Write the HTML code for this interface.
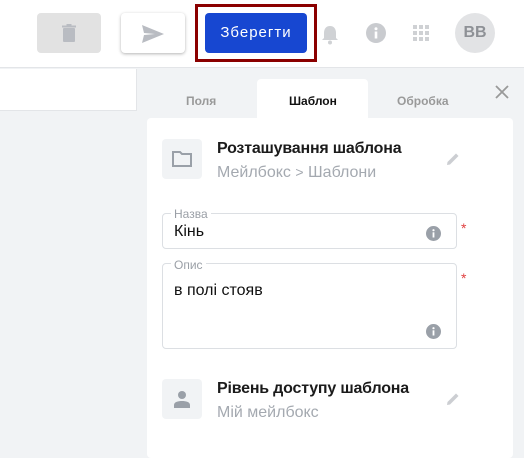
<!DOCTYPE html><html><head><meta charset="utf-8"><style>
*{box-sizing:border-box;margin:0;padding:0}
body{width:524px;height:451px;overflow:hidden;background:#f1f3f5;font-family:"Liberation Sans","DejaVu Sans",sans-serif;position:relative}
.a{position:absolute}
.hdr{left:0;top:0;width:524px;height:68px;background:#fff;border-bottom:1px solid #e3e5e8}
.ib{width:40px;height:40px;border-radius:4px;background:#f1f3f5}
.t{font-size:16px;font-weight:bold;color:#1b1b1b;letter-spacing:-0.2px}
.s{font-size:16px;color:#a4a9b0}
.fld{border:1px solid #dcdfe3;border-radius:4px;background:#fff}
.lab{font-size:12px;color:#9a9fa6;background:#fff;padding:0 3px}
</style></head><body>
<div class="a hdr"></div>
<div class="a" style="left:37px;top:13px;width:64px;height:40px;background:#e2e2e2;border-radius:4px"></div>
<svg class="a" style="left:60px;top:24px" width="18" height="19" viewBox="0 0 18 19"><rect x="3" y="4" width="12" height="14" rx="1" fill="#b9bcc2"/><rect x="2" y="1.5" width="14" height="2" fill="#b9bcc2"/><rect x="6.5" y="0" width="5" height="2" fill="#b9bcc2"/></svg>
<div class="a" style="left:121px;top:13px;width:64px;height:40px;background:#fff;border-radius:4px;box-shadow:0 1px 3px rgba(0,0,0,.3)"></div>
<svg class="a" style="left:142px;top:25px" width="22" height="18" viewBox="0 0 22 18"><path d="M0 0L22 9L0 18L2 10L13 9L2 8Z" fill="#b9bcc2"/></svg>
<div class="a" style="left:195px;top:4px;width:122px;height:58px;border:3px solid #8b0000"></div>
<div class="a" style="left:205px;top:13px;width:102px;height:40px;background:#1747d1;border-radius:4px;color:#fff;font-size:15px;text-align:center;line-height:40px;letter-spacing:1px">Зберегти</div>
<svg class="a" style="left:320px;top:24px" width="20" height="21" viewBox="0 0 20 21"><path d="M10 2C6 2 4 5 4 9V14L2 16H18L16 14V9C16 5 14 2 10 2Z" fill="#d0d2d5"/><circle cx="10" cy="18.5" r="2" fill="#d0d2d5"/></svg>
<svg class="a" style="left:366px;top:23px" width="20" height="20"><circle cx="10" cy="10" r="10" fill="#c9cbcf"/><rect x="8.7" y="8.5" width="2.6" height="7" fill="#fff"/><circle cx="10" cy="5.8" r="1.5" fill="#fff"/></svg>
<svg class="a" style="left:413px;top:25px" width="16" height="16"><g fill="#cfd1d4"><rect x="0" y="0" width="4" height="4"/><rect x="6" y="0" width="4" height="4"/><rect x="12" y="0" width="4" height="4"/><rect x="0" y="6" width="4" height="4"/><rect x="6" y="6" width="4" height="4"/><rect x="12" y="6" width="4" height="4"/><rect x="0" y="12" width="4" height="4"/><rect x="6" y="12" width="4" height="4"/><rect x="12" y="12" width="4" height="4"/></g></svg>
<div class="a" style="left:455px;top:13px;width:40px;height:40px;border-radius:50%;background:#e2e3e5;color:#8e9196;font-weight:bold;font-size:16px;text-align:center;line-height:40px">BB</div>
<div class="a" style="left:0;top:69px;width:137px;height:42px;background:#fff;border-right:1px solid #e3e5e8;border-bottom:1px solid #e3e5e8"></div>
<div class="a" style="left:186px;top:94px;font-size:12px;font-weight:bold;color:#999">Поля</div>
<div class="a" style="left:257px;top:79px;width:111px;height:40px;background:#fff;border-radius:4px 4px 0 0"></div>
<div class="a" style="left:289px;top:94px;font-size:12px;font-weight:bold;color:#111">Шаблон</div>
<div class="a" style="left:397px;top:94px;font-size:12px;font-weight:bold;color:#999">Обробка</div>
<svg class="a" style="left:494px;top:84px" width="16" height="16"><path d="M2 2L14 14M14 2L2 14" stroke="#999" stroke-width="1.8"/></svg>
<div class="a" style="left:147px;top:118px;width:366px;height:340px;background:#fff;border-radius:4px"></div>
<div class="a ib" style="left:162px;top:139px"></div>
<svg class="a" style="left:172px;top:151px" width="20" height="16"><path d="M1 1H8L10 3H19V15H1Z" fill="none" stroke="#9aa0a8" stroke-width="2"/></svg>
<div class="a t" style="left:217px;top:140px">Розташування шаблона</div>
<div class="a s" style="left:217px;top:164px">Мейлбокс <span style="font-size:14px">&gt;</span> Шаблони</div>
<svg class="a" style="left:446px;top:152px" width="14" height="14"><path d="M1 13L1.5 10L10 1.5L12.5 4L4 12.5Z" fill="#ccced2"/></svg>
<div class="a fld" style="left:162px;top:213px;width:295px;height:36px"></div>
<div class="a lab" style="left:171px;top:207px">Назва</div>
<div class="a" style="left:174px;top:223px;font-size:16px;color:#111">Кінь</div>
<svg class="a" style="left:426px;top:226px" width="15" height="15"><circle cx="7.5" cy="7.5" r="7.5" fill="#9aa0a8"/><rect x="6.6" y="6.3" width="1.8" height="5.2" fill="#fff"/><circle cx="7.5" cy="4.2" r="1.1" fill="#fff"/></svg>
<div class="a" style="left:461px;top:220px;color:#e04040;font-size:14px">*</div>
<div class="a fld" style="left:162px;top:263px;width:295px;height:86px"></div>
<div class="a lab" style="left:171px;top:258px">Опис</div>
<div class="a" style="left:174px;top:282px;font-size:16px;color:#111">в полі стояв</div>
<svg class="a" style="left:426px;top:324px" width="15" height="15"><circle cx="7.5" cy="7.5" r="7.5" fill="#9aa0a8"/><rect x="6.6" y="6.3" width="1.8" height="5.2" fill="#fff"/><circle cx="7.5" cy="4.2" r="1.1" fill="#fff"/></svg>
<div class="a" style="left:461px;top:270px;color:#e04040;font-size:14px">*</div>
<div class="a ib" style="left:162px;top:379px"></div>
<svg class="a" style="left:173px;top:390px" width="18" height="18"><circle cx="9" cy="5" r="4" fill="#9aa0a8"/><path d="M1 18V15C1 12 5 11 9 11C13 11 17 12 17 15V18Z" fill="#9aa0a8"/></svg>
<div class="a t" style="left:217px;top:380px">Рівень доступу шаблона</div>
<div class="a s" style="left:217px;top:404px">Мій мейлбокс</div>
<svg class="a" style="left:446px;top:392px" width="14" height="14"><path d="M1 13L1.5 10L10 1.5L12.5 4L4 12.5Z" fill="#ccced2"/></svg>
</body></html>
